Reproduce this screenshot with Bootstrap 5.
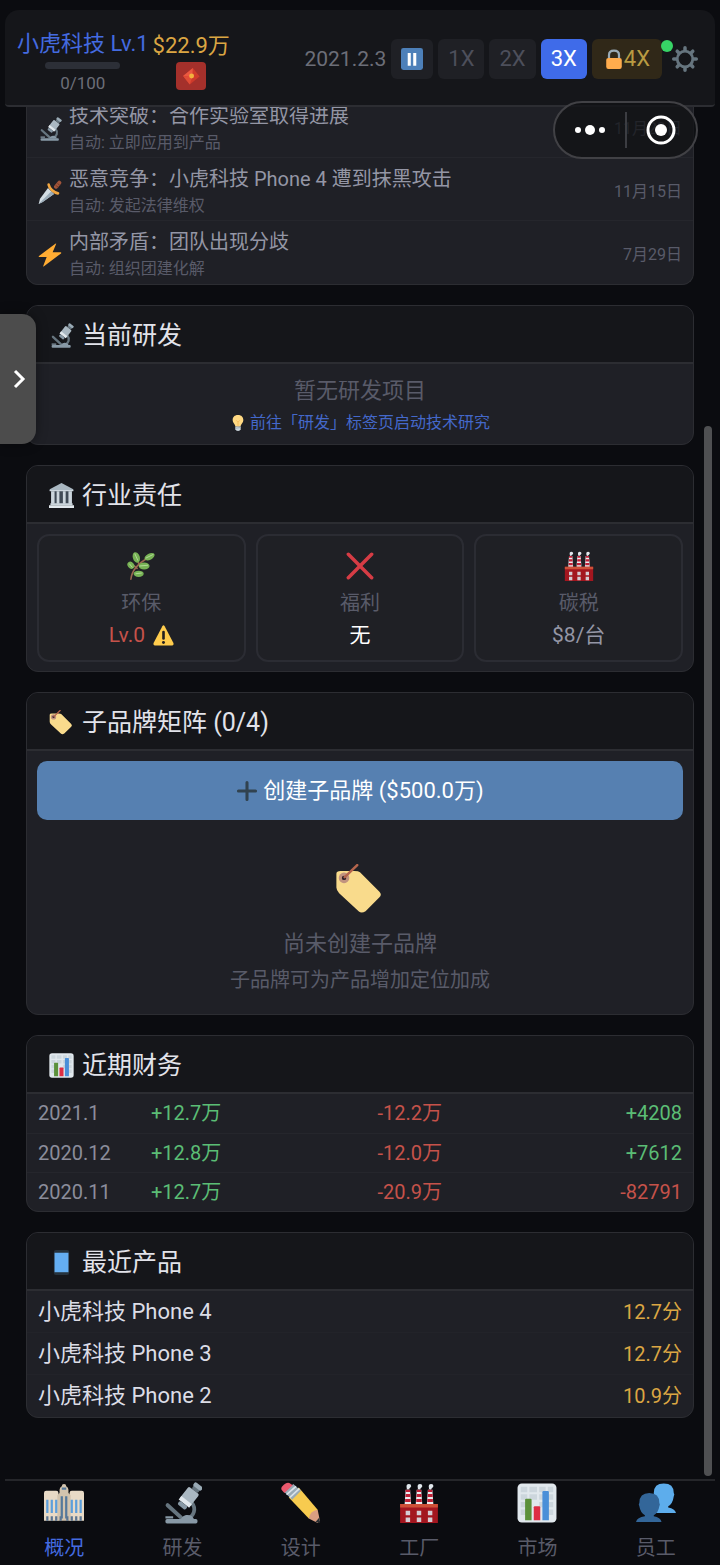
<!DOCTYPE html>
<html lang="zh-CN" data-bs-theme="dark">
<head>
<meta charset="utf-8">
<meta name="viewport" content="width=device-width, initial-scale=1">
<title>小虎科技</title>
<link href="https://cdn.jsdelivr.net/npm/bootstrap@5.3.0/dist/css/bootstrap.min.css" rel="stylesheet">
<style>
  :root { --page: #0b0c10; --bar: #15161a; --panel: #1f2026; --line: #2c2d32; --dim: #595b69; --soft: #9496a5;
          --blue: #446be0; --gold: #dba643; --green: #5bbd75; --red: #c5524a; }
  body { background: var(--page); color: #dcdde6; font-family: Roboto, "Noto Sans CJK SC", sans-serif; font-size: 20px; line-height: 28px; font-weight: 400; }
  svg { display: block; flex: none; }
  .app { min-height: 100vh; padding: 10px 5px 0; }
  .topbar { background: var(--bar); border-bottom: 2px solid var(--line); border-radius: 14px 14px 4px 4px; height: 97px; padding: 3px 16px 0 12px; }
  .brand { padding-top: 4px; }
  .company { font-size: 22px; color: var(--blue); }
  .xp { width: 75px; height: 7px; background: #2c2f37; }
  .xp-text { font-size: 17px; line-height: 20px; color: #6c6e78; }
  .money { font-size: 22px; line-height: 32px; color: var(--gold); }
  .gift { background: #a4302b; border: 0; border-radius: 4px; width: 30px; height: 28px; padding: 3px; }
  .controls { gap: 5px; }
  .gamedate { font-size: 21px; color: #6c6e78; }
  .speed { height: 40px; border: 0; border-radius: 6px; background: #1f2025; color: #4d4f5b; font-size: 22px; padding: 0 10px; }
  .speed.on { background: #3f6be9; color: #fff; }
  .speed.locked { background: #302818; color: #b99b42; padding: 0 12px; }
  .online { width: 12px; height: 12px; background: #37d466; top: -5px; left: -10px; }
  .capsule { top: 101px; right: 22px; width: 145px; height: 58px; border: 2px solid #414145; border-radius: 29px; background: rgba(16, 17, 20, .74); z-index: 5; }
  .capsule button { background: none; border: 0; padding: 0; }
  .capsule .split { width: 2px; height: 36px; background: #3c3d42; }
  .drawer { top: 314px; left: 0; width: 36px; height: 130px; background: #4c4c4c; border: 0; border-radius: 0 14px 14px 0; z-index: 5; box-shadow: 0 0 12px rgba(0, 0, 0, .4); }
  .thumb { width: 8px; top: 319px; bottom: 3px; right: 3px; background: #4f5052; }
  main { padding: 0 21px 60px; }
  .panel { background: var(--panel); border: 1px solid var(--line); border-radius: 12px; overflow: hidden; margin-bottom: 20px; }
  .panel > h2 { background: var(--bar); border-bottom: 2px solid var(--line); height: 58px; margin: 0; padding: 3px 22px 0; font-size: 25px; font-weight: 400; line-height: 36px; gap: 8px; color: #e2e3ea; }
  .events { margin-top: -12px; border-top: 0; border-radius: 0 0 12px 12px; }
  .event { height: 63px; padding: 5px 11px 0; gap: 7px; border-bottom: 1px solid #25262c; color: var(--soft); }
  .event:last-child { border-bottom-color: transparent; }
  .event p, .idle p { margin: 0; }
  .event small, .event time { font-size: 16px; line-height: 25px; color: var(--dim); display: block; }
  .idle { padding: 12px 10px 9px; gap: 5px; }
  .idle p { font-size: 22px; line-height: 30px; color: var(--dim); }
  .idle a { font-size: 16px; line-height: 24px; color: #4468ca; gap: 4px; }
  .tiles { padding: 10px 10px 9px; gap: 10px; }
  .tile { border: 2px solid #2b2c33; border-radius: 12px; padding: 15px 8px 11px; background: #1f2025; }
  .tile .lbl { line-height: 26px; color: var(--dim); margin-top: 9px; }
  .tile .val { font-size: 21px; line-height: 28px; margin-top: 5px; }
  .tile .plain { color: var(--soft); }
  .create { margin: 10px 10px 0; height: 59px; background: #5680b1; color: #fff; border: 0; border-radius: 10px; font-size: 22px; gap: 5px; }
  .blank { padding: 44px 10px 20px; color: var(--dim); }
  .blank p { margin: 15px 0 7px; font-size: 22px; line-height: 30px; }
  .ledger { margin: 0; width: 100%; table-layout: fixed; }
  .ledger td { height: 39px; padding: 0; border-bottom: 1px solid #25262c; }
  .ledger td:first-child { padding-left: 11px; color: #8b8d9b; }
  .ledger td:last-child { padding-right: 11px; text-align: right; }
  .ledger tr:last-child td { border-bottom: 0; }
  .ledger td.up, .up { color: var(--green); } .ledger td.down, .down { color: var(--red); } .gold { color: var(--gold); }
  .product { height: 42px; padding: 0 11px; font-size: 22px; border-bottom: 1px solid #222329; }
  .product .gold { font-size: 20px; }
  .tabs { border-top: 2px solid #25262a; height: 86px; }
  .tabs a { color: var(--dim); gap: 10px; padding-top: 1px; }
  .tabs a.current { color: var(--blue); }
</style>
</head>
<body>
<svg width="0" height="0" class="position-absolute" aria-hidden="true">
  <symbol id="scope" viewBox="0 -2 36 38">
    <path d="M27 17c4 5 2 12-4 14" fill="none" stroke="#66757f" stroke-width="3.4"/>
    <path d="M5 19l12 11" stroke="#66757f" stroke-width="3.6" stroke-linecap="round"/>
    <path d="M3 30h7" stroke="#8899a6" stroke-width="2"/>
    <path d="M17 32c1-5 10-6 12 0z" fill="#8899a6"/>
    <rect x="3" y="31.500" width="29" height="4" rx="1.500" fill="#8899a6"/>
    <g transform="rotate(38 22 13)"><rect x="20" y="-3" width="7" height="6" rx="1.500" fill="#66757f"/><rect x="19" y="-4" width="9" height="4" rx="1.500" fill="#99aab5"/><rect x="17" y="3" width="12" height="14" rx="1.500" fill="#aab8c2"/><rect x="17" y="14" width="12" height="4" fill="#e1e8ed"/><rect x="18.500" y="18" width="9" height="4" rx="1.500" fill="#8899a6"/></g>
  </symbol>
  <symbol id="dagger" viewBox="0 0 36 36"><path d="M27 10l5-6" stroke="#a0543a" stroke-width="6" stroke-linecap="round"/><path d="M27 8l3 3M29.500 5l3 3" stroke="#74371f" stroke-width="1.500"/><path d="M15 12l9 9L7 33l-6 3 2-8z" fill="#d3dde4"/><path d="M20 17L1 36l6-3 17-12z" fill="#9aabb8"/><path d="M16 7c1 6 8 12 14 13" fill="none" stroke="#f2a640" stroke-width="4" stroke-linecap="round"/></symbol>
  <symbol id="bolt" viewBox="0 0 36 36"><path d="M26 1L2 19q-2 2 0 2h11L8 34q-1 2 1 1l25-19q2-2 0-2H22l5-12q1-2-1-1z" fill="#ffac33"/></symbol>
  <symbol id="bulb" viewBox="0 0 36 36"><path d="M18 0C10 0 6 5 6 11c0 7 6 9 6 15h12c0-6 6-8 6-15C30 5 26 0 18 0z" fill="#ffd983"/><path d="M14 12l4 4 4-4M18 16v10" fill="none" stroke="#f5b95a" stroke-width="2"/><path d="M12 26h12v6q-1 4-6 4t-6-4z" fill="#ccd6dd"/><path d="M12 30l12-2" stroke="#99aab5" stroke-width="2"/></symbol>
  <symbol id="bank" viewBox="0 0 36 36"><path d="M3 10h30v22H3z" fill="#3f4a55"/><path d="M18 0L1 9v2h34V9z" fill="#aab8c2"/><path d="M1 10h34v2H1z" fill="#ccd6dd"/><path d="M3 12h5v18H3zM11 12h4v18h-4zM20 12h4v18h-4zM28 12h5v18h-5z" fill="#ccd6dd"/><path d="M2 29h32v3H2z" fill="#ccd6dd"/><path d="M0 32h36v4H0z" fill="#e1e8ed"/></symbol>
  <symbol id="herb" viewBox="0 0 36 36"><path d="M5 35c1-10 8-20 23-28M13 21L8 17M16 17l-3-7" fill="none" stroke="#9a6550" stroke-width="2" stroke-linecap="round"/><g fill="#77b255"><ellipse cx="12" cy="7" rx="4.500" ry="7" transform="rotate(-18 12 7)"/><ellipse cx="29" cy="6" rx="7" ry="4" transform="rotate(-28 29 6)"/><ellipse cx="5" cy="17" rx="4" ry="5" transform="rotate(-40 5 17)"/><ellipse cx="22" cy="18" rx="7" ry="4.500"/><ellipse cx="15" cy="28" rx="6.500" ry="4"/></g><g fill="none" stroke="#b5dc9b" stroke-width="1.200"><path d="M10 2l4 9M24 8l10-5M3 15l4 5M16 18l11-1M11 28l8-1"/></g></symbol>
  <symbol id="cross" viewBox="0 0 36 36"><path d="M3 3l30 30M33 3L3 33" stroke="#d63c45" stroke-width="4.500" stroke-linecap="round"/></symbol>
  <symbol id="factory" viewBox="0 0 36 36"><g id="stack"><path d="M6 6h4l1 14H5z" fill="#ececf0"/><path d="M6 6h4v2H6zM6 10h4.300v2.500H5.700zM5.500 14.500h5v2.500h-5z" fill="#be2036"/><path d="M7 5q-1-4 2-4 2 0 2 2-1 2-3 3z" fill="#e1e8ed"/></g><use href="#stack" x="10"/><use href="#stack" x="20"/><path d="M1 19h34v17H1z" fill="#a3161f"/><path d="M1 19h34v3H1z" fill="#cf5038"/><path d="M6 25h4v4H6zM16 25h4v4h-4zM26 25h4v4h-4zM6 31h4v4H6zM16 31h4v4h-4zM26 31h4v4h-4z" fill="#d5ccd4"/></symbol>
  <symbol id="warn" viewBox="0 0 36 36"><path d="M16 2q2-3 4 0l15 29q1 4-2 4H3q-3 0-2-4z" fill="#ffcc4d"/><path d="M18 12v11" stroke="#231f20" stroke-width="4.500" stroke-linecap="round"/><circle cx="18" cy="30" r="2.500" fill="#231f20"/></symbol>
  <symbol id="tag" viewBox="0 0 36 36"><path d="M1 7q0-2 3-2h10q3 0 4 1l14 14q2 2 0 4L22 34q-3 2-5 0L3 21q-2-2-2-4z" fill="#f9db8c"/><circle cx="6.500" cy="10" r="3.800" fill="#c1937f"/><circle cx="6.500" cy="10" r="1.600" fill="#30222a"/><path d="M7 9.500L16 .8" stroke="#b5654d" stroke-width="1.800" stroke-linecap="round"/></symbol>
  <symbol id="plus" viewBox="0 0 36 36"><path d="M18 4v28M4 18h28" stroke="#31424f" stroke-width="5" stroke-linecap="round"/></symbol>
  <symbol id="chart" viewBox="-.5 -.5 37 37"><rect width="36" height="36" rx="4" fill="#e1e8ed"/><path d="M3 3h6v5H3zM11 3h7v5h-7zM20 3h6v5h-6zM28 3h5v5h-5zM3 10h6v5H3zM11 10h7v5h-7zM20 10h6v5h-6zM28 10h5v5h-5zM3 17h6v5H3zM20 17h6v5h-6zM28 17h5v5h-5zM3 24h6v5H3zM28 24h5v5h-5z" fill="#ccd6dd"/><path d="M7 15q0-1 1-1h4q1 0 1 1v19H7z" fill="#5c913b"/><path d="M15 22q0-1 1-1h4q1 0 1 1v12h-6z" fill="#dd2e44"/><path d="M23 8q0-1 1-1h4q1 0 1 1v26h-6z" fill="#4a8fd8"/></symbol>
  <symbol id="phone" viewBox="0 0 36 36"><rect x="7" width="22" height="36" rx="3" fill="#26323c"/><path d="M8 4h20v28H8z" fill="#64aef2"/></symbol>
  <symbol id="towers" viewBox="0 0 36 36"><path d="M0 9q0-2 2-2h9q2 0 2 2v25H0zM23 9q0-2 2-2h9q2 0 2 2v25H23z" fill="#e8dac6"/><path d="M14 6q0-2 2-3 0-2 2-2t2 2q2 1 2 3v3l2 2v23H12V11l2-2z" fill="#d3c4ae"/><path d="M16 4h4v2h-4zM15 12h2v20h-2zM19 12h2v20h-2z" fill="#55799c"/><path d="M2 15h2v12H2zM6 15h2v12H6zM10 15h2v12h-2zM24 15h2v12h-2zM28 15h2v12h-2zM32 15h2v12h-2z" fill="#5c9fdc"/><path d="M2 30h2v4H2zM6 30h2v4H6zM10 30h2v4h-2zM14 30h2v4h-2zM20 30h2v4h-2zM24 30h2v4h-2zM28 30h2v4h-2zM32 30h2v4h-2z" fill="#5a7592"/></symbol>
  <symbol id="pencil" viewBox="0 0 36 36"><path d="M7 13l9-9 17 20-8 8z" fill="#f7cb4f"/><path d="M25 32q1-7 8-8l2 10-2 2z" fill="#d99e82"/><path d="M31 35l3.500-4 .5 5z" fill="#292f33"/><path d="M3 8l8-7 7 6-8 8z" fill="#99aab5"/><path d="M5 10.500L13.500 3M8 13l8.500-8" stroke="#d9e2e9" stroke-width="1.500"/><path d="M.500 6q-1-2 2-4.500t5-1.500l3 2-7.500 7z" fill="#ea596e"/></symbol>
  <symbol id="people" viewBox="0 0 36 36"><path d="M16 9q0-8.500 9-8.500T34 9q1 1 0 3-1 7-5 9v1q6 1 7 5H18z" fill="#5dadec"/><path d="M3 18q0-9 9-9t9 9q1 1 0 3-1 6-5 8v1q6 1 7 5H0q1-4 8-5v-1q-4-2-5-8-1-2 0-3z" fill="#336699"/></symbol>
  <symbol id="lock" viewBox="0 0 36 36"><path d="M9 18v-7q0-8 9-8t9 8v7" fill="none" stroke="#99aab5" stroke-width="4"/><rect x="4" y="16" width="28" height="20" rx="4" fill="#ffac4d"/></symbol>
  <symbol id="pause" viewBox="0 0 36 36"><rect width="36" height="36" rx="4" fill="#4d80b9"/><path d="M11 8h5v21h-5zM20 8h5v21h-5z" fill="#fff"/></symbol>
  <symbol id="envelope" viewBox="0 0 36 36"><path d="M5 18L21 5l11 14-16 13z" fill="#cf3a2b"/><path d="M5 18L21 5l-1 15z" fill="#ea5840"/><path d="M5 18l15 2-4 12z" fill="#e04c36"/><circle cx="19" cy="18" r="4" fill="#f3b13e"/></symbol>
  <symbol id="gear" viewBox="0 0 36 36"><circle cx="18" cy="18" r="10" fill="none" stroke="#66757f" stroke-width="3.600"/><path d="M18 7V3.500M18 29v3.500M7 18H3.500M29 18h3.500M10.200 10.200L8 8M25.800 25.800L28 28M25.800 10.200L28 8M10.200 25.800L8 28" stroke="#66757f" stroke-width="4.500" stroke-linecap="round"/></symbol>
</svg>

<div class="app d-flex flex-column position-relative">
  <header class="topbar d-flex align-items-center justify-content-between">
    <div class="brand d-flex align-items-start gap-1">
      <div class="d-flex flex-column align-items-center">
        <div class="company text-nowrap">小虎科技 Lv.1</div>
        <div class="xp rounded-pill mt-1" role="progressbar" aria-label="经验" aria-valuenow="0" aria-valuemin="0" aria-valuemax="100"></div>
        <div class="xp-text mt-1">0/100</div>
      </div>
      <div class="d-flex flex-column align-items-center">
        <div class="money">$22.9万</div>
        <button class="gift" type="button" aria-label="红包"><svg width="24" height="22"><use href="#envelope"/></svg></button>
      </div>
    </div>
    <div class="controls d-flex align-items-center">
      <span class="gamedate">2021.2.3</span>
      <button class="speed" type="button" aria-label="暂停"><svg width="22" height="22"><use href="#pause"/></svg></button>
      <button class="speed" type="button">1X</button>
      <button class="speed" type="button">2X</button>
      <button class="speed on" type="button">3X</button>
      <button class="speed locked d-flex align-items-center" type="button"><svg width="20" height="20"><use href="#lock"/></svg>4X</button>
      <span class="position-relative d-flex ms-1"><span class="online position-absolute rounded-circle"></span>
        <button class="border-0 bg-transparent p-0" type="button" aria-label="设置"><svg width="28" height="28"><use href="#gear"/></svg></button></span>
    </div>
  </header>

  <div class="capsule position-absolute d-flex align-items-center justify-content-evenly">
    <button type="button" aria-label="更多"><svg width="32" height="14"><g fill="#fff"><circle cx="4" cy="7" r="3"/><circle cx="16" cy="7" r="5"/><circle cx="28" cy="7" r="3"/></g></svg></button>
    <span class="split"></span>
    <button type="button" aria-label="关闭"><svg width="32" height="32"><circle cx="16" cy="16" r="13" fill="none" stroke="#fff" stroke-width="3"/><circle cx="16" cy="16" r="6" fill="#fff"/></svg></button>
  </div>
  <button class="drawer position-absolute p-0" type="button" aria-label="展开"><svg class="ms-auto me-2" width="18" height="24"><path d="M5 4l8 8-8 8" fill="none" stroke="#fff" stroke-width="3"/></svg></button>

  <div class="position-relative flex-grow-1 overflow-hidden">
    <main>
      <section class="panel events">
        <div class="event d-flex align-items-center"><svg width="24" height="24"><use href="#scope"/></svg><div class="flex-grow-1"><p>技术突破：合作实验室取得进展</p><small>自动: 立即应用到产品</small></div><time>11月29日</time></div>
        <div class="event d-flex align-items-center"><svg width="24" height="24"><use href="#dagger"/></svg><div class="flex-grow-1"><p>恶意竞争：小虎科技 Phone 4 遭到抹黑攻击</p><small>自动: 发起法律维权</small></div><time>11月15日</time></div>
        <div class="event d-flex align-items-center"><svg width="24" height="24"><use href="#bolt"/></svg><div class="flex-grow-1"><p>内部矛盾：团队出现分歧</p><small>自动: 组织团建化解</small></div><time>7月29日</time></div>
      </section>

      <section class="panel">
        <h2 class="d-flex align-items-center"><svg width="25" height="25"><use href="#scope"/></svg>当前研发</h2>
        <div class="idle d-flex flex-column align-items-center">
          <p>暂无研发项目</p>
          <a href="#" class="d-flex align-items-center text-decoration-none"><svg width="16" height="16"><use href="#bulb"/></svg>前往「研发」标签页启动技术研究</a>
        </div>
      </section>

      <section class="panel">
        <h2 class="d-flex align-items-center"><svg width="25" height="25"><use href="#bank"/></svg>行业责任</h2>
        <div class="tiles d-flex text-center">
          <div class="tile flex-fill w-100"><svg class="mx-auto" width="28" height="30"><use href="#herb"/></svg><div class="lbl">环保</div><div class="val down d-flex justify-content-center align-items-center gap-2">Lv.0<svg width="21" height="21"><use href="#warn"/></svg></div></div>
          <div class="tile flex-fill w-100"><svg class="mx-auto" width="28" height="30"><use href="#cross"/></svg><div class="lbl">福利</div><div class="val text-white">无</div></div>
          <div class="tile flex-fill w-100"><svg class="mx-auto" width="30" height="30"><use href="#factory"/></svg><div class="lbl">碳税</div><div class="val plain">$8/台</div></div>
        </div>
      </section>

      <section class="panel">
        <h2 class="d-flex align-items-center"><svg width="25" height="25"><use href="#tag"/></svg>子品牌矩阵 (0/4)</h2>
        <div class="d-grid"><button class="create d-flex align-items-center justify-content-center" type="button"><svg width="22" height="22"><use href="#plus"/></svg>创建子品牌 ($500.0万)</button></div>
        <div class="blank text-center"><svg class="mx-auto" width="50" height="50"><use href="#tag"/></svg><p>尚未创建子品牌</p><div>子品牌可为产品增加定位加成</div></div>
      </section>

      <section class="panel">
        <h2 class="d-flex align-items-center"><svg width="25" height="25"><use href="#chart"/></svg>近期财务</h2>
        <table class="ledger">
          <colgroup><col style="width:124px"><col style="width:34%"><col style="width:34%"><col></colgroup>
          <tbody>
            <tr><td>2021.1</td><td class="up">+12.7万</td><td class="down">-12.2万</td><td class="up">+4208</td></tr>
            <tr><td>2020.12</td><td class="up">+12.8万</td><td class="down">-12.0万</td><td class="up">+7612</td></tr>
            <tr><td>2020.11</td><td class="up">+12.7万</td><td class="down">-20.9万</td><td class="down">-82791</td></tr>
          </tbody>
        </table>
      </section>

      <section class="panel mb-0">
        <h2 class="d-flex align-items-center"><svg width="25" height="25"><use href="#phone"/></svg>最近产品</h2>
        <div class="product d-flex align-items-center justify-content-between">小虎科技 Phone 4<span class="gold">12.7分</span></div>
        <div class="product d-flex align-items-center justify-content-between">小虎科技 Phone 3<span class="gold">12.7分</span></div>
        <div class="product d-flex align-items-center justify-content-between border-0">小虎科技 Phone 2<span class="gold">10.9分</span></div>
      </section>
    </main>
    <div class="thumb position-absolute rounded-pill"></div>
  </div>

  <nav class="tabs row row-cols-6 g-0 text-center" aria-label="主导航">
    <a href="#" class="current d-flex flex-column align-items-center text-decoration-none"><svg width="40" height="42"><use href="#towers"/></svg>概况</a>
    <a href="#" class="d-flex flex-column align-items-center text-decoration-none"><svg width="40" height="42"><use href="#scope"/></svg>研发</a>
    <a href="#" class="d-flex flex-column align-items-center text-decoration-none"><svg width="40" height="42"><use href="#pencil"/></svg>设计</a>
    <a href="#" class="d-flex flex-column align-items-center text-decoration-none"><svg width="40" height="42"><use href="#factory"/></svg>工厂</a>
    <a href="#" class="d-flex flex-column align-items-center text-decoration-none"><svg width="40" height="42"><use href="#chart"/></svg>市场</a>
    <a href="#" class="d-flex flex-column align-items-center text-decoration-none"><svg width="40" height="42"><use href="#people"/></svg>员工</a>
  </nav>
</div>
<script src="https://cdn.jsdelivr.net/npm/bootstrap@5.3.0/dist/js/bootstrap.bundle.min.js"></script>
</body>
</html>
